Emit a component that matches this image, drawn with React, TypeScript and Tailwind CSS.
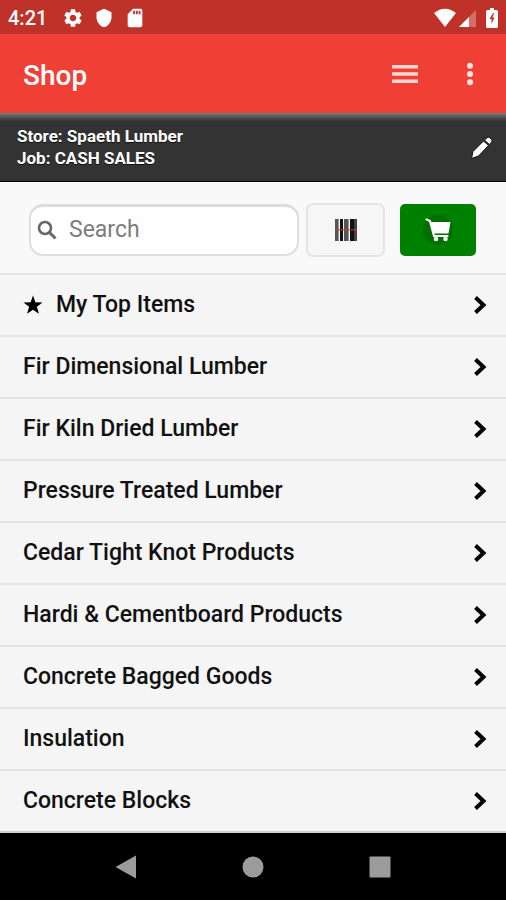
import React, { useState } from 'react'
import { MdSettings, MdShield, MdSdCard } from 'react-icons/md'

const categories = [
  'My Top Items',
  'Fir Dimensional Lumber',
  'Fir Kiln Dried Lumber',
  'Pressure Treated Lumber',
  'Cedar Tight Knot Products',
  'Hardi & Cementboard Products',
  'Concrete Bagged Goods',
  'Insulation',
  'Concrete Blocks',
]

function StatusBar() {
  return (
    <div className="flex h-[34px] items-center bg-[#bf3229] pt-px pr-2 pl-2 text-white">
      <span className="w-[54px] text-xl font-medium">4:21</span>
      <MdSettings className="h-[22px] w-[22px]" />
      <MdShield className="ml-[9px] h-5 w-[22px]" />
      <MdSdCard className="ml-[9px] h-[22px] w-[22px]" />
      <div className="ml-auto flex items-center">
        <svg width="22" height="20" viewBox="0 0 22 20" fill="currentColor" aria-label="Wi-Fi">
          <path d="M0 5Q11 -3.500 22 5L11 19z" />
        </svg>
        <svg width="18" height="20" viewBox="0 0 18 20" fill="currentColor" className="ml-[3px]" aria-label="Signal">
          <path d="M0 19L17 2v17z" opacity=".3" />
          <path d="M0 19L10 9v10z" />
        </svg>
        <svg width="12" height="20" viewBox="0 0 12 20" className="ml-[9px]" aria-label="Battery">
          <path d="M4 0h4v2h2.500q1.500 0 1.500 1.500v15q0 1.500-1.500 1.500h-9Q0 20 0 18.500v-15Q0 2 1.500 2H4z" fill="#fff" />
          <path d="M7 5L3.500 11H5.500V16L8.500 9.500H6.500L8 5z" fill="#bf3229" />
        </svg>
      </div>
    </div>
  )
}

function Header() {
  return (
    <header className="flex h-[79px] items-center bg-[#f04035] pr-[30px] pl-[23px] text-white">
      <h1 className="pt-1 text-[28px] font-medium">Shop</h1>
      <button aria-label="Menu" className="ml-auto text-[#ffd6d2]">
        <svg width="26" height="20" viewBox="0 0 26 20" fill="currentColor">
          <path d="M0 1h26v3.500H0zM0 8.200h26v3.500H0zM0 15.400h26v3.500H0z" />
        </svg>
      </button>
      <button aria-label="More options" className="ml-[46px] text-[#ffe3e0]">
        <svg width="12" height="24" viewBox="0 0 12 24" fill="currentColor">
          <circle cx="6" cy="3.700" r="3" />
          <circle cx="6" cy="12" r="3" />
          <circle cx="6" cy="20.300" r="3" />
        </svg>
      </button>
    </header>
  )
}

function StoreBar() {
  return (
    <section className="border-b border-black bg-[#333]">
      <div className="h-2 bg-linear-to-b from-[#7a7d7b] to-[#333]" />
      <div className="flex h-[60px] items-center pr-3 pb-2 pl-[17px]">
        <p className="text-[17px] leading-[22px] font-bold text-white [text-shadow:0_1px_0_#111]">
          Store: Spaeth Lumber
          <br />
          Job: CASH SALES
        </p>
        <button aria-label="Edit store" className="ml-auto">
          <svg width="24" height="26" viewBox="0 0 24 26" fill="#fff" stroke="#111" strokeWidth="1">
            <path d="M1.500 24.500L3 17.500 13.500 7l5 4.500L8.500 22z" />
            <path d="M14.500 6l2.500-2.300q1.500-1 3 .2l1.500 1.300q1.200 1.500 0 3L19.300 10.500z" />
          </svg>
        </button>
      </div>
    </section>
  )
}

function SearchRow() {
  const [query, setQuery] = useState('')

  return (
    <div className="flex h-[93px] items-center border-b-2 border-[#e4e4e4] bg-[#f9f9f9] pt-1 pr-[30px] pl-[29px]">
      <label className="flex h-[52px] min-w-0 flex-1 items-center rounded-[14px] border-2 border-t-[3px] border-[#ddd] bg-white pl-[6px]">
        <svg width="20" height="20" viewBox="0 0 20 20" className="shrink-0" aria-hidden="true">
          <circle cx="8" cy="8" r="6" fill="none" stroke="#666" strokeWidth="2.600" />
          <path d="M12.500 12.500L18.500 18.500" stroke="#666" strokeWidth="3" />
        </svg>
        <input
          type="text"
          aria-label="Search"
          placeholder="Search"
          value={query}
          onChange={(e) => setQuery(e.target.value)}
          className="ml-3 w-full min-w-0 bg-transparent text-[23px] text-[#333] outline-none placeholder:text-[#7d7d7d]"
        />
      </label>
      <button
        aria-label="Scan barcode"
        className="ml-[7px] flex h-[54px] w-[79px] items-center justify-center rounded-[7px] border-2 border-[#e4e4e4] bg-[#f6f6f6]"
      >
        <svg width="22" height="22" viewBox="0 0 22 22">
          <path d="M0 0h3v22H0zM9 0h4v22H9z" fill="#555" />
          <path d="M5 0h3v22H5zM15 0h4v22h-4z" fill="#111" />
          <path d="M3 0h1v22H3zM13 0h1v22h-1z" fill="#999" />
          <path d="M19 0h3v22h-3z" fill="#444" />
          <path d="M0 10h22v1.500H0z" fill="#c0392b" opacity=".7" />
        </svg>
      </button>
      <button
        aria-label="Cart"
        className="ml-[15px] flex h-[52px] w-[76px] items-center justify-center rounded-[5px] bg-[#008000]"
      >
        <svg width="32" height="32" viewBox="0 0 32 32">
          <circle cx="16" cy="16" r="15" fill="#006e00" />
          <path d="M4.500 5.500l3.500 1.500L12 22h13.500" fill="none" stroke="#fff" strokeWidth="2.200" strokeLinecap="round" />
          <path d="M8 8h20.500l-2 11.500H11z" fill="#fff" />
          <circle cx="14" cy="25" r="2.300" fill="#fff" />
          <circle cx="23.500" cy="25" r="2.300" fill="#fff" />
        </svg>
      </button>
    </div>
  )
}

function CategoryList() {
  return (
    <ul>
      {categories.map((name, index) => (
        <li key={name} className="border-b-2 border-[#e4e4e4] last:border-[#cfcfcf]">
          <a
            href="#"
            className="flex h-[60px] items-center pr-[19px] pl-[23px] text-[23px] font-medium text-[#111]"
          >
            {index === 0 && (
              <svg width="20" height="20" viewBox="0 0 20 20" className="mr-[13px]" aria-hidden="true">
                <path d="M10 .5l2.400 6.700 7.100.2-5.600 4.400 2 6.900L10 14.700l-5.900 4 2-6.900L.5 7.400l7.100-.2z" />
              </svg>
            )}
            {name}
            <svg width="14" height="20" viewBox="0 0 14 20" className="ml-auto shrink-0" aria-hidden="true">
              <path d="M2.500 2.500L10.500 10l-8 7.500" fill="none" stroke="#000" strokeWidth="4" />
            </svg>
          </a>
        </li>
      ))}
    </ul>
  )
}

function NavBar() {
  return (
    <nav className="flex h-[67px] items-center justify-center gap-[103px] bg-black text-[#9b9b9b]">
      <button aria-label="Back">
        <svg width="24" height="24" viewBox="0 0 24 24" fill="currentColor">
          <path d="M1.500 12L22 .5v23z" />
        </svg>
      </button>
      <button aria-label="Home">
        <svg width="24" height="24" viewBox="0 0 24 24" fill="currentColor">
          <circle cx="12" cy="12" r="10.500" />
        </svg>
      </button>
      <button aria-label="Recent apps">
        <svg width="24" height="24" viewBox="0 0 24 24" fill="currentColor">
          <rect x="1.500" y="1.500" width="21" height="21" rx="1" />
        </svg>
      </button>
    </nav>
  )
}

export default function App() {
  return (
    <div className="flex min-h-screen flex-col bg-[#f5f5f5] font-[Roboto,sans-serif]">
      <StatusBar />
      <Header />
      <StoreBar />
      <main className="flex-1">
        <SearchRow />
        <CategoryList />
      </main>
      <NavBar />
    </div>
  )
}
